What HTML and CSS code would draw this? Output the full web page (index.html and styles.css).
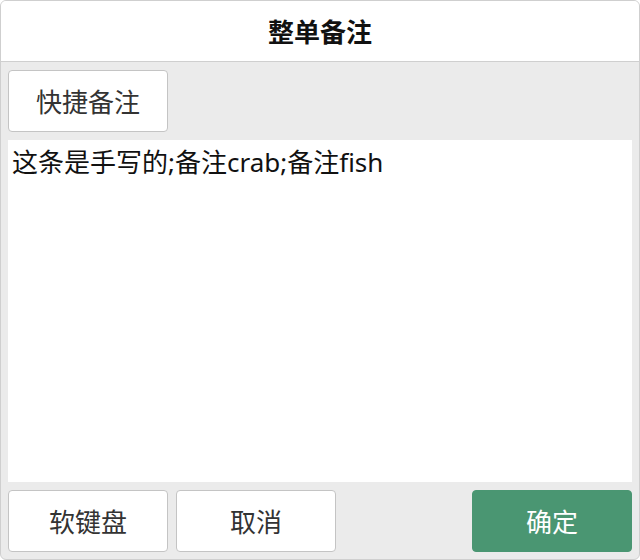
FILE: index.html
```html
<!DOCTYPE html>
<html lang="zh-CN">
<head>
    <meta charset="UTF-8">
    <title>整单备注</title>
    <link rel="stylesheet" href="styles.css">
</head>
<body>

    <div class="dialog">
        <header class="dialog-title">整单备注</header>

        <div class="dialog-body">
            <div class="toolbar">
                <button class="btn">快捷备注</button>
            </div>

            <textarea class="note-input">这条是手写的;备注crab;备注fish</textarea>

            <div class="actions">
                <button class="btn">软键盘</button>
                <button class="btn">取消</button>
                <button class="btn btn-primary">确定</button>
            </div>
        </div>
    </div>

</body>
</html>
```

FILE: styles.css
```css
/* General */
body {
    margin: 0;
    font-family: "Noto Sans", "Noto Sans CJK SC", sans-serif;
    color: #333;
    background: #ffffff;
}

/* Dialog frame */
.dialog {
    box-sizing: border-box;
    width: 640px;
    height: 560px;
    border: 1px solid #cfcfcf;
    border-radius: 6px;
    background: #ebebeb;
    display: flex;
    flex-direction: column;
    overflow: hidden;
}

.dialog-title {
    height: 60px;
    background: #ffffff;
    border-bottom: 1px solid #cfcfcf;
    display: flex;
    align-items: center;
    justify-content: center;
    font-size: 26px;
    font-weight: bold;
    color: #111;
}

.dialog-body {
    flex: 1;
    display: flex;
    flex-direction: column;
    gap: 8px;
    padding: 8px 7px 7px;
    min-height: 0;
}

/* Buttons */
.btn {
    box-sizing: border-box;
    width: 160px;
    height: 62px;
    padding: 0;
    border: 1px solid #c4c4c4;
    border-radius: 4px;
    background: #ffffff;
    color: #333;
    font-family: inherit;
    font-size: 26px;
    cursor: pointer;
}

.btn-primary {
    margin-left: auto;
    background: #4a9672;
    border-color: #4a9672;
    color: #ffffff;
}

.toolbar,
.actions {
    display: flex;
    gap: 8px;
}

/* Note text */
.note-input {
    flex: 1;
    min-height: 0;
    border: none;
    outline: none;
    resize: none;
    padding: 3px 4px;
    background: #ffffff;
    color: #111;
    font-family: inherit;
    font-size: 26px;
    line-height: 38px;
}
```
